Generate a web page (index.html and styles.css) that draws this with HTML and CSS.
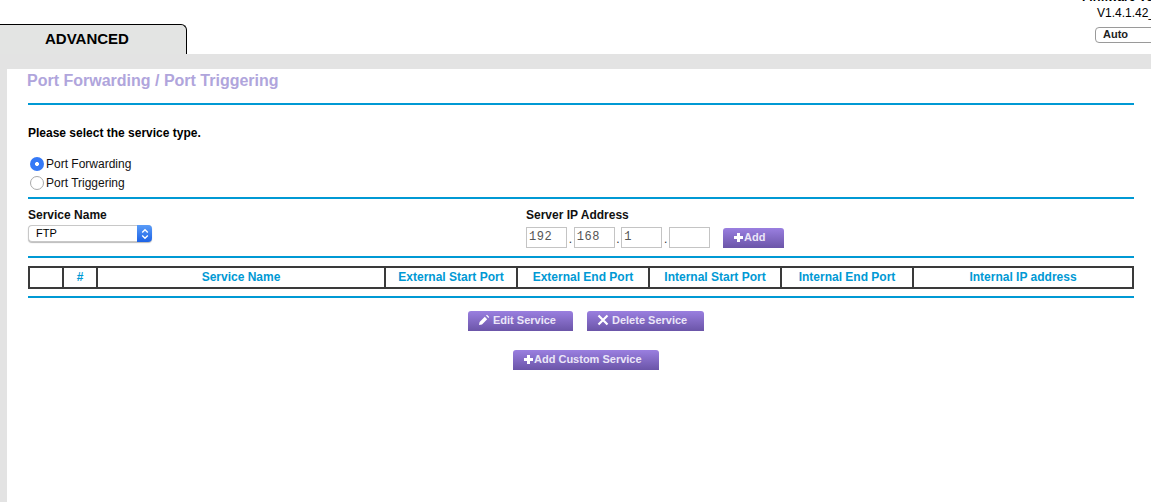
FILE: index.html
```html
<!DOCTYPE html>
<html lang="en">
<head>
<meta charset="utf-8">
<title>Port Forwarding / Port Triggering</title>
<link rel="stylesheet" href="styles.css">
</head>
<body>
<header class="top">
  <div class="tab">ADVANCED</div>
  <div class="info">
    <div class="fw-label">Firmware Version</div>
    <div class="fw-value">V1.4.1.42_10.1.57</div>
    <div class="lang">Auto</div>
  </div>
</header>
<div class="band"></div>
<main class="panel">
  <h1 class="title">Port Forwarding / Port Triggering</h1>
  <hr class="rule rule-title">
  <p class="prompt">Please select the service type.</p>
  <div class="radios">
    <label class="radio-row"><span class="radio radio-on"></span>Port Forwarding</label>
    <label class="radio-row"><span class="radio"></span>Port Triggering</label>
  </div>
  <hr class="rule">
  <section class="service">
    <div class="svc-col">
      <div class="field-label">Service Name</div>
      <div class="select">
        <span class="select-text">FTP</span>
        <span class="select-arrows">
          <svg width="8" height="12" viewBox="0 0 8 12"><path d="M1.2 4.4 4 1.8l2.8 2.6M1.2 7.6 4 10.2l2.8-2.6" fill="none" stroke="#fff" stroke-width="1.4"/></svg>
        </span>
      </div>
    </div>
    <div class="ip-col">
      <div class="field-label">Server IP Address</div>
      <div class="ip-row">
        <span class="ip-box">192</span><span class="dot">.</span>
        <span class="ip-box">168</span><span class="dot">.</span>
        <span class="ip-box">1</span><span class="dot">.</span>
        <span class="ip-box"></span>
        <span class="btn btn-add"><svg class="plus" width="11" height="11" viewBox="0 0 11 11"><path d="M4 1h3v3h3v3H7v3H4V7H1V4h3z" fill="#fff"/></svg>Add</span>
      </div>
    </div>
  </section>
  <hr class="rule rule-table">
  <table class="grid">
    <colgroup>
      <col class="c-check"><col class="c-num"><col class="c-name">
      <col class="c-port"><col class="c-port"><col class="c-port"><col class="c-port"><col class="c-ip">
    </colgroup>
    <thead>
      <tr>
        <th></th><th>#</th><th>Service Name</th><th>External Start Port</th><th>External End Port</th><th>Internal Start Port</th><th>Internal End Port</th><th>Internal IP address</th>
      </tr>
    </thead>
  </table>
  <hr class="rule rule-after">
  <div class="actions">
    <span class="btn btn-edit"><svg class="icon" width="12" height="12" viewBox="0 0 12 12"><path d="M1 11l.6-3L6.800 2.800l2.400 2.400L4 10.400zM8 1.600 9 .8l2.200 2.200-.8 1z" fill="#fff"/></svg>Edit Service</span>
    <span class="btn btn-delete"><svg class="icon" width="12" height="12" viewBox="0 0 12 12"><path d="M1.500 1.500l9 9M10.500 1.500l-9 9" stroke="#fff" stroke-width="2.200" fill="none"/></svg>Delete Service</span>
  </div>
  <div class="actions actions-2">
    <span class="btn btn-custom"><svg class="plus" width="11" height="11" viewBox="0 0 11 11"><path d="M4 1h3v3h3v3H7v3H4V7H1V4h3z" fill="#fff"/></svg>Add Custom Service</span>
  </div>
</main>
</body>
</html>
```
FILE: styles.css
```css
* { box-sizing: border-box; }
html, body { margin: 0; padding: 0; height: 502px; overflow: hidden; background: #e3e3e3; }
body { font-family: "Liberation Sans", Arial, sans-serif; color: #000; width: 1151px; }

.top { height: 54px; background: #fff; display: flex; justify-content: space-between; align-items: flex-end; position: relative; overflow: hidden; }
.tab { width: 187px; height: 30px; background: #e3e4e3; border-top: 1px solid #000; border-right: 1px solid #000; border-top-right-radius: 6px; font-size: 15px; font-weight: bold; line-height: 28px; padding-left: 45px; }
.info { width: 56px; height: 54px; white-space: nowrap; font-size: 12px; align-self: flex-start; }
.fw-label { margin-top: -10px; height: 15px; line-height: 15px; font-weight: bold; margin-left: -13px; }
.fw-value { height: 15px; line-height: 16px; margin-left: 2px; }
.lang { margin-top: 7px; width: 70px; height: 16px; border: 1px solid #9a9a9a; border-radius: 4px; font-size: 11px; font-weight: bold; line-height: 13px; padding-left: 7px; color: #222; }

.band { height: 15px; background: #e3e3e3; }
.panel { height: 433px; margin-left: 7px; background: #fff; padding: 0 17px 0 21px; }

.title { margin: 0 0 0 -1px; padding-top: 3px; height: 34px; font-size: 16px; font-weight: bold; line-height: 18px; color: #b0a5dc; }
.rule { display: block; margin: 0; border: 0; height: 2px; background: #0099d4; }
.prompt { margin: 0; padding-top: 21px; height: 41px; line-height: 14px; font-size: 12px; font-weight: bold; }
.radios { padding-left: 2px; padding-top: 8px; height: 51px; }
.radio-row { display: flex; align-items: center; height: 19.5px; font-size: 12px; color: #111; }
.radio { width: 14px; height: 14px; border-radius: 50%; border: 1px solid #a9a9a9; background: #fff; margin-right: 2px; }
.radio-on { border: 0; background: radial-gradient(circle, #fff 0, #fff 1.600px, #3579f6 2.300px); }

.service { display: flex; height: 57px; padding-top: 9px; }
.svc-col { width: 498px; }
.field-label { font-size: 12px; font-weight: bold; height: 14px; line-height: 14px; color: #111; }
.select { margin-top: 3px; width: 124px; height: 17px; display: flex; border-radius: 4px; border: 1px solid #c8c8c8; border-right: 0; background: #fff; font-size: 11px; line-height: 15px; box-shadow: 0 1px 1px #bbb; }
.select-text { flex: 1; padding-left: 7px; }
.select-arrows { width: 15px; height: 17px; margin-top: -1px; background: linear-gradient(#5a9cf8, #1d63e6); border-radius: 0 4px 4px 0; display: flex; align-items: center; justify-content: center; }

.ip-row { display: flex; align-items: flex-start; margin-top: 5px; }
.ip-box { width: 41px; height: 21px; border: 1px solid #c4c4c4; font-family: "Liberation Mono", monospace; font-size: 12px; line-height: 19px; padding-left: 2px; color: #555; letter-spacing: .6px; }
.dot { width: 6.67px; text-align: center; font-size: 12px; line-height: 25px; color: #333; }

.btn { display: inline-flex; align-items: center; justify-content: flex-start; height: 20px; padding: 0 0 2px 10px; border-radius: 3px 3px 0 0; background: linear-gradient(#9a7fe0, #6b55a8); color: #ebe6f8; font-size: 11px; font-weight: bold; white-space: nowrap; }
.btn-add { width: 61px; margin-left: 13px; margin-top: 1px; }
.icon { margin-right: 3px; }

.rule-table { margin-bottom: 8px; }
.grid { width: 1104px; border-collapse: collapse; table-layout: fixed; border: 2px solid #3a3a3a; }
.grid th { height: 21px; padding: 0 0 1px; border: 2px solid #3a3a3a; color: #0099d4; font-size: 12px; font-weight: bold; text-align: center; line-height: 14px; }
.c-check, .c-num { width: 34px; }
.c-name { width: 288px; }
.c-port { width: 132px; }
.c-ip { width: 220px; }
.rule-after { margin-top: 7px; }

.actions { display: flex; justify-content: center; gap: 14px; padding-top: 13px; margin-left: 10px; }
.actions-2 { padding-top: 19px; }
.btn-edit { width: 105px; }
.btn-delete { width: 117px; }
.btn-custom { width: 146px; }
```
